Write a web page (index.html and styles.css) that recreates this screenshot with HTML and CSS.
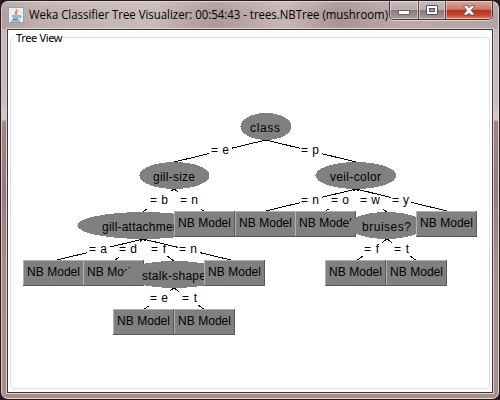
FILE: index.html
```html
<!DOCTYPE html>
<html lang="en">
<head>
<meta charset="utf-8">
<title>Weka Classifier Tree Visualizer</title>
<link rel="stylesheet" href="styles.css">
</head>
<body>
<div class="window">
  <header class="titlebar">
    <svg class="java" width="16" height="16" viewBox="0 0 16 16">
      <rect x=".5" y=".5" width="15" height="15" fill="#e9f0f5" stroke="#8ba6bb"/>
      <path d="M8.5 2C9.5 4 5.5 5 7.5 8M10.5 4C8 5 8 6 9 8" fill="none" stroke="#e88a3c" stroke-width="1.2"/>
      <path d="M4 9h7M4.5 11h6M5 12.5h5M3 14h9M11 9c3-1 2 2 0 2" fill="none" stroke="#567f9f"/>
    </svg>
    <h1 class="title"><svg width="362" height="20"><text x="0" y="14" textLength="359" lengthAdjust="spacingAndGlyphs">Weka Classifier Tree Visualizer: 00:54:43 - trees.NBTree (mushroom)</text></svg></h1>
    <div class="controls">
      <span class="control minimize"><svg width="12" height="6"><rect x=".5" y=".5" width="11" height="4" rx=".5" fill="#fff" stroke="#626069"/></svg></span>
      <span class="control maximize"><svg width="12" height="10"><rect x=".5" y=".5" width="11" height="9" rx=".5" fill="#fff" stroke="#53535d"/><rect x="3.5" y="3.5" width="5" height="3" fill="#a09aa0" stroke="#53535d"/></svg></span>
      <span class="control close"><svg width="12" height="11" viewBox="0 0 12 11"><path d="M.8.7h3.4L6 2.8 7.8.7h3.4v1L8.1 5.3l3.1 3.8v1H7.8L6 8l-1.8 2.1H.8v-1l3.1-3.8L.8 1.7z" fill="#fff" stroke="#5b4b50" stroke-width=".8"/></svg></span>
    </div>
  </header>
  <main class="client">
    <fieldset class="group">
      <legend>Tree View</legend>
    </fieldset>
    <svg class="tree" width="500" height="400" viewBox="0 0 500 400">
      <defs>
        <g id="leaf">
          <rect width="61" height="26" fill="#808080"/>
          <path d="M0 25.5H60.5V0" fill="none" stroke="#595959"/>
          <path d="M.5 25V.5H60" fill="none" stroke="#b2b2b2"/>
        </g>
      </defs>
      <g class="edges">
        <path d="M174 189L143 212M174 189L205 212"/>
        <path d="M356 189L326 211M356 189L387 212"/>
        <path d="M143 239L114 261M143 239L174 261"/>
        <path d="M387 239L356 261M387 239L417 261"/>
        <path d="M174 288L143 310M174 288L205 310"/>
      </g>
      <g class="plates">
        <path d="M147 191h24v18h-24zM178 191h23v18h-23z"/>
        <path d="M329 191h24v18h-24zM359 191h24v18h-24z"/>
        <path d="M117 241h23v16h-23zM146 241h22v15h-22z"/>
        <path d="M362 242h20v14h-20zM392 242h19v14h-19z"/>
        <path d="M148 291h22v15h-22zM179 291h20v14h-20z"/>
      </g>
      <g class="edges">
        <path d="M266 140L174 162M266 140L356 162"/>
        <path d="M356 189L266 211M356 189L447 211"/>
        <path d="M143 239L53 261M143 239L235 261"/>
      </g>
      <g class="plates">
        <path d="M209 143h23v13h-23zM300 143h22v13h-22z"/>
        <path d="M300 193h22v13h-22zM391 193h20v13h-20z"/>
        <path d="M87 243h23v12h-23zM178 243h22v12h-22z"/>
      </g>
      <g class="labels">
        <text x="211" y="154" textLength="18">= e</text><text x="301" y="154" textLength="18">= p</text>
        <text x="150" y="204" textLength="18">= b</text><text x="180" y="204" textLength="18">= n</text>
        <text x="301" y="204" textLength="18">= n</text><text x="331" y="204" textLength="18">= o</text>
        <text x="360" y="204" textLength="20">= w</text><text x="392" y="204" textLength="17">= y</text>
        <text x="89" y="253" textLength="18">= a</text><text x="119" y="253" textLength="18">= d</text>
        <text x="151" y="253" textLength="15">= f</text><text x="179" y="253" textLength="18">= n</text>
        <text x="364" y="253" textLength="15">= f</text><text x="394" y="253" textLength="15">= t</text>
        <text x="150" y="302" textLength="18">= e</text><text x="182" y="302" textLength="15">= t</text>
      </g>
      <g class="nodes">
        <ellipse cx="266" cy="126.5" rx="25.5" ry="13.5"/><text x="250" y="132" textLength="30">class</text>
        <ellipse cx="174.5" cy="175.5" rx="35" ry="13.5"/><text x="153" y="181" textLength="42">gill-size</text>
        <ellipse cx="356" cy="175.5" rx="40.5" ry="13.5"/><text x="330" y="181" textLength="51">veil-color</text>
        <ellipse cx="143.5" cy="225.5" rx="66" ry="13.5"/><text x="102" y="231" textLength="81">gill-attachment</text>
        <use href="#leaf" x="174" y="211"/><text x="178" y="227" textLength="53">NB Model</text>
        <use href="#leaf" x="235" y="211"/><text x="239" y="227" textLength="53">NB Model</text>
        <use href="#leaf" x="295" y="211"/><text x="299" y="227" textLength="53">NB Model</text>
        <ellipse cx="386.5" cy="225.5" rx="38" ry="13.5"/><text x="362" y="231" textLength="49">bruises?</text>
        <use href="#leaf" x="416" y="211"/><text x="420" y="227" textLength="53">NB Model</text>
        <use href="#leaf" x="23" y="260"/><text x="27" y="276" textLength="53">NB Model</text>
        <use href="#leaf" x="83" y="260"/><text x="87" y="276" textLength="53">NB Model</text>
        <ellipse cx="174.5" cy="274.5" rx="51" ry="13.5"/><text x="142" y="280" textLength="64">stalk-shape</text>
        <use href="#leaf" x="204" y="260"/><text x="208" y="276" textLength="53">NB Model</text>
        <use href="#leaf" x="325" y="260"/><text x="329" y="276" textLength="53">NB Model</text>
        <use href="#leaf" x="386" y="260"/><text x="390" y="276" textLength="53">NB Model</text>
        <use href="#leaf" x="113" y="309"/><text x="117" y="325" textLength="53">NB Model</text>
        <use href="#leaf" x="174" y="309"/><text x="178" y="325" textLength="53">NB Model</text>
      </g>
    </svg>
  </main>
</div>
</body>
</html>
```
FILE: styles.css
```css
* { box-sizing: border-box; }
body { margin: 0; width: 500px; height: 400px; overflow: hidden; background: #241a20; }
.window {
  position: relative;
  display: flex;
  flex-direction: column;
  width: 498px;
  height: 398px;
  margin: 1px 0 0 1px;
  padding: 0 5px 5px;
  border: 1px solid #e3d5d4;
  border-left-color: #d9c9c7;
  border-radius: 7px;
  background: linear-gradient(#c4b6b6 0, #c9bdbc 100px, #d6cbca 117px, #a28483 120px, #947b7c 190px, #a88c8a 260px, #a88f8d 100%);
}
.titlebar {
  display: flex;
  flex: 0 0 27px;
  margin: 0 -5px;
  padding: 0 5px 0 6px;
  border-radius: 6px 6px 0 0;
  background:
    linear-gradient(#ffffff20, transparent 40%),
    linear-gradient(90deg, #b2a0a0 0, #c0b0af 8%, #c9bbb9 30%, #ad9999 43%, #c6b7b5 57%, #a89494 68%, #bba9a9 80%, #b4a4a3 100%);
}
.java { flex: none; margin-top: 5px; }
.title { flex: none; margin: 3px 0 0 5px; width: 359px; height: 20px; font: 12px "Open Sans", "Noto Sans", sans-serif; }
.title svg { display: block; overflow: visible; }
.controls {
  display: flex;
  flex: none;
  width: 104px;
  height: 19px;
  margin: -1px 0 0 1px;
  border: 1px solid #49393c;
  border-top: 0;
  border-radius: 0 0 5px 5px;
  overflow: hidden;
  box-shadow: 0 1px #ddd1d0;
}
.control {
  display: flex;
  align-items: center;
  justify-content: center;
  border-left: 1px solid #5b494b;
  box-shadow: inset 0 0 0 1px #ffffff70;
  background: linear-gradient(#c9bcbc 0, #b9aaab 48%, #897779 50%, #ab9a9b 100%);
}
.minimize { width: 28px; border-left: 0; padding-top: 6px; }
.maximize { width: 27px; }
.close { width: 47px; background: linear-gradient(#dba69a 0, #cc7567 47%, #b3331f 50%, #c74830 80%, #e28a67 100%); }
.client {
  flex: 1;
  display: flex;
  padding: 1px 2px 3px;
  border: 1px solid #413738;
  background: #fff;
  box-shadow: 0 0 0 1px #ddd0cf;
}
.group {
  flex: 1;
  min-width: 0;
  margin: 0;
  padding: 0;
  border: 1px solid #d5dfe5;
  border-radius: 4px;
}
.group legend {
  margin-left: 4px;
  padding: 0 1px;
  font: 11px/13px "Noto Sans", sans-serif;
  letter-spacing: -.35px;
  color: #000;
}
.tree {
  position: absolute;
  left: -2px;
  top: -2px;
  font: 12px "Liberation Sans", Arial, sans-serif;
  shape-rendering: crispEdges;
}
.edges { fill: none; stroke: #000; }
.plates { fill: #fff; }
.nodes ellipse { fill: #808080; }
```
